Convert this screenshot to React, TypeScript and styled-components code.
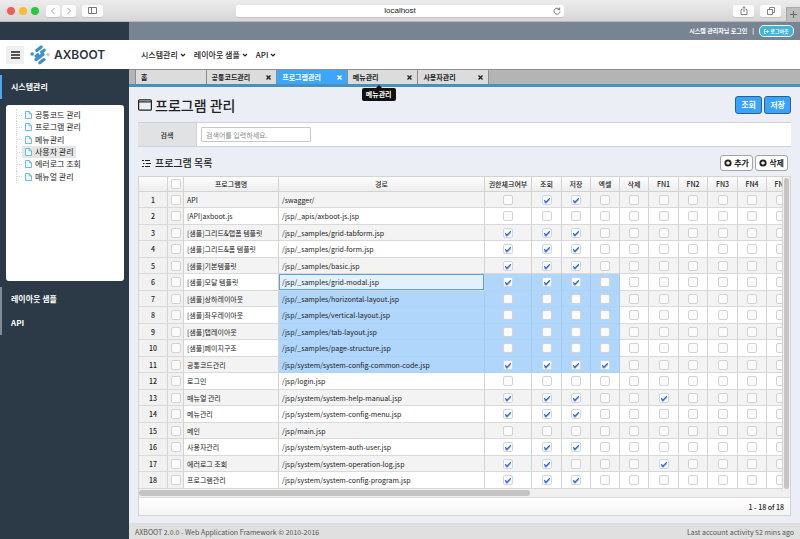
import React from "react";
import styled, { createGlobalStyle } from "styled-components";

const GlobalStyle = createGlobalStyle`
  *, *::before, *::after { box-sizing: border-box; }
  body {
    margin: 0;
    font-family: "Noto Sans CJK KR", "Noto Sans", sans-serif;
    font-size: 7px;
    line-height: 12px;
    color: #222;
    background: #ebeef5;
  }
  button, input { font: inherit; color: inherit; margin: 0; }
  h1, h2, ul { margin: 0; padding: 0; }
  ul { list-style: none; }
  a { color: inherit; text-decoration: none; }
`;

const SIDE = "129px";

const Window = styled.div`
  min-height: 100vh;
  display: flex;
  flex-direction: column;
`;

/* ---------- browser bar ---------- */

const TitleBar = styled.div`
  height: 22px;
  display: grid;
  grid-template-columns: 1fr 328px 1fr;
  background: linear-gradient(#ececec, #d6d6d6);
  border-bottom: 1px solid #b9b9b9;
`;

const ChromeGroup = styled.div<{ $end?: boolean }>`
  display: flex;
  align-items: center;
  gap: 2px;
  justify-content: ${(p) => (p.$end ? "flex-end" : "flex-start")};
  padding-left: ${(p) => (p.$end ? "0" : "7px")};
`;

const Lights = styled.div`
  display: flex;
  gap: 4px;
  margin-right: 5px;
`;

const Light = styled.span<{ $color: string }>`
  width: 8px;
  height: 8px;
  border-radius: 50%;
  background: ${(p) => p.$color};
`;

const ChromeButton = styled.button<{ $wide?: boolean; $gap?: boolean }>`
  width: ${(p) => (p.$wide ? "21px" : "14px")};
  height: 12px;
  margin-left: ${(p) => (p.$gap ? "4px" : "0")};
  display: flex;
  align-items: center;
  justify-content: center;
  padding: 0;
  border: 0;
  border-radius: 2px;
  background: #fbfbfb;
  color: #777;
  box-shadow: 0 1px 0 #c4c4c4;
`;

const NewTab = styled.button`
  width: 14px;
  align-self: flex-end;
  height: 14px;
  margin-left: 3px;
  display: flex;
  align-items: center;
  justify-content: center;
  padding: 0;
  border: 1px solid #a9a9a9;
  border-width: 1px 0 0 1px;
  background: #bdbdbd;
  color: #666;
`;

const Address = styled.div`
  align-self: center;
  height: 12px;
  display: grid;
  grid-template-columns: 14px 1fr 14px;
  align-items: center;
  justify-items: center;
  background: #fff;
  border-radius: 2px;
  box-shadow: 0 1px 0 #c4c4c4;
  font-family: "Liberation Sans", sans-serif;
  font-size: 8px;
`;

/* ---------- application header ---------- */

const TopBar = styled.div`
  height: 18px;
  flex: none;
  display: grid;
  grid-template-columns: ${SIDE} 1fr;
  background: #2c3947;
`;

const UserBar = styled.div`
  display: flex;
  align-items: center;
  justify-content: flex-end;
  gap: 5px;
  padding-right: 6px;
  background: #788492;
  color: #fff;
  font-size: 6px;
  font-weight: 700;
`;

const Logout = styled.button`
  height: 12px;
  width: 35px;
  display: flex;
  align-items: center;
  justify-content: center;
  gap: 1px;
  padding: 0;
  border: 1px solid #e8f6fb;
  border-radius: 5px;
  background: #43b3d8;
  color: #fff;
  font-size: 5px;
  line-height: 8px;
`;

const NavBar = styled.header`
  height: 29px;
  flex: none;
  display: grid;
  grid-template-columns: ${SIDE} 1fr;
  align-items: center;
  background: #fff;
`;

const Brand = styled.div`
  display: flex;
  align-items: center;
  padding-left: 6px;
`;

const MenuToggle = styled.button`
  width: 18px;
  height: 18px;
  padding: 0;
  border: 0;
  display: flex;
  align-items: center;
  justify-content: center;
  background: #efefef;
  color: #222;
`;

const LogoArt = styled.svg`
  width: 20px;
  height: 20px;
  margin: 0 4px 0 6px;
`;

const Wordmark = styled.span`
  font-family: Inter, sans-serif;
  font-size: 12px;
  font-weight: 600;
  color: #2c333d;
`;

const Nav = styled.nav`
  display: flex;
  gap: 8px;
  padding-left: 12px;
`;

const NavLink = styled.a`
  display: flex;
  align-items: center;
  gap: 2px;
  font-size: 8px;
  font-weight: 500;
`;

/* ---------- side menu ---------- */

const Body = styled.div`
  flex: 1;
  display: grid;
  grid-template-columns: ${SIDE} minmax(0, 1fr);
`;

const Side = styled.aside`
  background: #2c3947;
  display: flex;
  flex-direction: column;
  padding-top: 6px;
`;

const SideItem = styled.a<{ $active?: boolean }>`
  height: 24px;
  display: flex;
  align-items: center;
  padding-left: 9px;
  border-left: 2px solid ${(p) => (p.$active ? "#4aa8ee" : "#7f8b98")};
  color: #fff;
  font-size: 8px;
  font-weight: 700;
`;

const TreePanel = styled.div`
  height: 176px;
  margin: 6px 5px 6px 6px;
  padding: 4px 0 0 10px;
  background: #fff;
  border-radius: 3px;
`;

const Tree = styled.ul`
  height: 74px;
  display: grid;
  grid-template-rows: repeat(6, 1fr);
`;

const TreeItem = styled.li`
  display: flex;
  align-items: center;
  border-left: 1px dotted #d4d4d4;

  &::before {
    content: "";
    width: 5px;
    border-top: 1px dotted #d4d4d4;
  }
`;

const TreeLink = styled.a<{ $active?: boolean }>`
  height: 12px;
  display: flex;
  align-items: center;
  gap: 3px;
  padding: 0 2px 0 3px;
  background: ${(p) => (p.$active ? "#e6e6e6" : "transparent")};
  font-size: 8px;
  font-weight: 400;
`;

/* ---------- tabs ---------- */

const Main = styled.main`
  display: flex;
  flex-direction: column;
`;

const TabStrip = styled.div`
  height: 18px;
  display: flex;
  padding-left: 6px;
  background: #b4b4b4;
  border-top: 1px solid #8e8e8e;
  border-bottom: 3px solid #4791bd;
`;

const Tabs = styled.div`
  width: 354px;
  display: grid;
  grid-template-columns: repeat(5, 1fr);
  border-left: 1px solid #8c8c8c;
`;

const Tab = styled.div<{ $active?: boolean }>`
  position: relative;
  display: flex;
  align-items: center;
  justify-content: space-between;
  padding: 0 5px 0 5px;
  border-right: 1px solid #8c8c8c;
  background: ${(p) => (p.$active ? "#3ea6fa" : "#dcdcdc")};
  color: ${(p) => (p.$active ? "#fff" : "#222")};
`;

const TabName = styled.button`
  padding: 0;
  border: 0;
  background: none;
  font-size: 7px;
  font-weight: 700;
  line-height: 12px;
`;

const TabClose = styled.button`
  padding: 0;
  border: 0;
  background: none;
  display: flex;
`;

const Tooltip = styled.span`
  position: absolute;
  z-index: 2;
  top: 18px;
  left: 14px;
  padding: 0 4px;
  border-radius: 2px;
  background: #111;
  color: #fff;
  font-size: 7px;
  font-weight: 700;
  line-height: 13px;
  white-space: nowrap;

  &::before {
    content: "";
    position: absolute;
    left: calc(50% - 3px);
    top: -3px;
    border: 3px solid transparent;
    border-top: 0;
    border-bottom-color: #111;
  }
`;

/* ---------- page ---------- */

const Page = styled.div`
  flex: 1;
  padding: 9px 9px 7px;
`;

const PageHead = styled.div`
  display: flex;
  align-items: center;
  justify-content: space-between;
`;

const PageTitle = styled.h1`
  display: flex;
  align-items: center;
  gap: 3px;
  font-size: 14px;
  font-weight: 500;
  line-height: 18px;
`;

const Actions = styled.div<{ $inset?: boolean }>`
  display: flex;
  gap: 2px;
  padding-right: ${(p) => (p.$inset ? "3px" : "0")};
`;

const PrimaryButton = styled.button`
  width: 27px;
  height: 18px;
  padding: 0;
  border: 1px solid #2b5f8e;
  border-radius: 3px;
  background: #3aa3fb;
  color: #fff;
  font-size: 8px;
  font-weight: 700;
  line-height: 12px;
`;

const SmallButton = styled.button`
  width: 33px;
  height: 16px;
  display: flex;
  align-items: center;
  justify-content: center;
  gap: 2px;
  padding: 0;
  border: 1px solid #a3a3a3;
  border-radius: 3px;
  background: #fff;
  font-size: 8px;
  font-weight: 700;
  line-height: 12px;
`;

const SearchRow = styled.form`
  margin-top: 8px;
  height: 25px;
  display: flex;
  border: 1px solid #cfd1d6;
  border-width: 1px 0;
  background: #fff;
`;

const SearchLabel = styled.label`
  width: 59px;
  display: flex;
  align-items: center;
  justify-content: center;
  background: #e1e2e4;
  border-right: 1px solid #cfd1d6;
  font-weight: 500;
`;

const SearchInput = styled.input`
  align-self: center;
  width: 110px;
  height: 15px;
  margin-left: 4px;
  padding: 0 4px;
  border: 1px solid #c8c8c8;
  border-radius: 1px;
  background: #fff;

  &::placeholder { color: #8a8a8a; }
`;

const ListHead = styled.div`
  margin-top: 8px;
  display: flex;
  align-items: center;
  justify-content: space-between;
`;

const ListTitle = styled.h2`
  display: flex;
  align-items: center;
  gap: 4px;
  padding-left: 4px;
  font-size: 10px;
  font-weight: 500;
  line-height: 16px;
`;

/* ---------- grid ---------- */

const GridBox = styled.section`
  margin-top: 5px;
  border: 1px solid #d3d3d3;
  background: #f0f0f0;
`;

const GridView = styled.div`
  display: flex;
`;

const Clip = styled.div`
  flex: 1;
  min-width: 0;
  overflow: hidden;
`;

const VTrack = styled.div`
  width: 8px;
  padding: 1px 1px 0 1px;
  display: flex;
  border-left: 1px solid #d3d3d3;
  background: #f0f0f0;
`;

const VThumb = styled.div`
  flex: 1;
  border-radius: 3px;
  background: #c4c4c4;
`;

const HTrack = styled.div`
  height: 9px;
  padding: 1px 0;
  border-bottom: 1px solid #dcdcdc;
`;

const HThumb = styled.div`
  width: 60%;
  height: 6px;
  border-radius: 3px;
  background: #c4c4c4;
`;

const Pager = styled.div`
  height: 17px;
  display: flex;
  align-items: center;
  justify-content: flex-end;
  padding-right: 6px;
  background: linear-gradient(#fff, #f4f4f4);
  font-weight: 500;
`;

const Table = styled.table`
  width: 657px;
  table-layout: fixed;
  border-collapse: separate;
  border-spacing: 0;
`;

const Col = styled.col<{ $w: number }>`
  width: ${(p) => p.$w}px;
`;

const HeadCell = styled.th`
  height: 15px;
  padding: 0;
  border-right: 1px solid #d3d3d3;
  border-bottom: 1px solid #d3d3d3;
  background: linear-gradient(#fdfdfd, #ededed);
  font-weight: 500;
  line-height: 12px;
  white-space: nowrap;
`;

const Row = styled.tr`
  height: 16px;
  background: #f3f3f3;

  &:nth-child(even) {
    height: 17px;
    background: #fff;
  }
`;

type CellKind = "plain" | "selected" | "focused";

const cellBack = { plain: "transparent", selected: "#b0d6fc", focused: "#e3f1fe" };

const Cell = styled.td<{ $kind?: CellKind; $align?: "center"; $fixed?: boolean }>`
  padding: 0 0 0 ${(p) => (p.$align ? "0" : "3px")};
  text-align: ${(p) => p.$align ?? "left"};
  border-right: 1px solid ${(p) => (p.$kind === "selected" ? "#a5c9ee" : "#d3d3d3")};
  border-bottom: 1px solid ${(p) => (p.$kind === "selected" ? "#aed2f6" : "#d9d9d9")};
  background: ${(p) => (p.$fixed ? "#f1f1f1" : cellBack[p.$kind ?? "plain"])};
  box-shadow: ${(p) => (p.$kind === "focused" ? "inset 0 0 0 1px #5b9fdf" : "none")};
  line-height: 12px;
  font-weight: ${(p) => (p.$fixed ? 500 : 400)};
  white-space: nowrap;
  overflow: hidden;
`;

const Check = styled.input.attrs({ type: "checkbox" })`
  appearance: none;
  display: block;
  width: 10px;
  height: 10px;
  margin: 0 auto;
  border: 1px solid #d2d2d2;
  border-radius: 2px;
  background: #fbfbfb;

  &:checked {
    border-color: #c5d8ee;
    background: #fff;
  }

  &:checked::after {
    content: "";
    display: block;
    width: 6px;
    height: 3px;
    margin: 2px 0 0 1px;
    border: solid #2f5bd0;
    border-width: 0 0 1px 1px;
    transform: rotate(-45deg);
    box-shadow: -1px 1px 0 0 #7f9ce4;
  }
`;

const Footer = styled.footer`
  height: 17px;
  display: flex;
  align-items: center;
  justify-content: space-between;
  padding: 0 6px;
  background: #e0e0e0;
  color: #555;
`;

/* ---------- drawings ---------- */

const Chevron = () => (
  <svg width="6" height="6" viewBox="0 0 6 6" fill="none" stroke="currentColor" strokeWidth="1.2">
    <path d="M1 2l2 2 2-2" />
  </svg>
);

const Arrow = ({ d }: { d: string }) => (
  <svg width="6" height="8" viewBox="0 0 6 8" fill="none" stroke="#a5a5a5">
    <path d={d} />
  </svg>
);

const Cross = () => (
  <svg width="5" height="5" viewBox="0 0 5 5" stroke="currentColor" strokeWidth="1.4">
    <path d="M.5.5l4 4M4.5.5l-4 4" />
  </svg>
);

const Doc = () => (
  <svg width="7" height="8" viewBox="0 0 7 8" fill="#f3faff" stroke="#58b4e0" strokeWidth=".9">
    <path d="M.5.5h3.7l2.3 2.3v4.7h-6zM4.2.5v2.3h2.3" />
  </svg>
);

const Logo = () => (
  <LogoArt viewBox="0 0 20 20" fill="none" stroke="#3d8fd0" strokeWidth="3.2" strokeLinecap="round">
    <path d="M6.800 5.400l4.400-3.400M6.200 11l1.600-1.200M11.600 7.200l2.600-2M6 14.600l7-5.200M9.800 17.800l4.200-3.200" />
    <circle cx="2.200" cy="9" r="1.800" fill="#3d8fd0" stroke="none" />
    <circle cx="18" cy="9.600" r="1.800" fill="#c9cdd2" stroke="none" />
  </LogoArt>
);

const WindowIcon = () => (
  <svg width="14" height="12" viewBox="0 0 14 12" fill="none" stroke="#222" strokeWidth="1.2">
    <rect x=".6" y=".8" width="12.8" height="10.4" rx="1" />
    <path d="M.6 2.9h12.800" />
  </svg>
);

const ListIcon = () => (
  <svg width="9" height="8" viewBox="0 0 9 8" stroke="#222">
    <path d="M0 1.500h2M3 1.500h5M1 4.500h1.500M4 4.500h5M0 7.500h2M3 7.500h5" />
  </svg>
);

const PlusIcon = () => (
  <svg width="8" height="8" viewBox="0 0 8 8">
    <circle cx="4" cy="4" r="3.6" fill="#222" />
    <path d="M2.200 4h3.600M4 2.200v3.600" stroke="#fff" strokeWidth="1.300" />
  </svg>
);

/* ---------- data ---------- */

const columns = [29, 16, 95, 206, 47, 30, 29, 29, 29, 30, 29, 30, 29, 29];
const heads = ["프로그램명", "경로", "권한체크여부", "조회", "저장", "엑셀", "삭제", "FN1", "FN2", "FN3", "FN4", "FN5"];
const flags = heads.slice(2);

const programs: [string, string, number[]][] = [
  ["API", "/swagger/", [1, 2]],
  ["[API]axboot.js", "/jsp/_apis/axboot-js.jsp", []],
  ["[샘플]그리드&탭폼 템플릿", "/jsp/_samples/grid-tabform.jsp", [0, 1, 2]],
  ["[샘플]그리드&폼 템플릿", "/jsp/_samples/grid-form.jsp", [0, 1, 2]],
  ["[샘플]기본템플릿", "/jsp/_samples/basic.jsp", [0, 1, 2]],
  ["[샘플]모달 템플릿", "/jsp/_samples/grid-modal.jsp", [0, 1, 2]],
  ["[샘플]상하레이아웃", "/jsp/_samples/horizontal-layout.jsp", []],
  ["[샘플]좌우레이아웃", "/jsp/_samples/vertical-layout.jsp", []],
  ["[샘플]탭레이아웃", "/jsp/_samples/tab-layout.jsp", []],
  ["[샘플]페이지구조", "/jsp/_samples/page-structure.jsp", []],
  ["공통코드관리", "/jsp/system/system-config-common-code.jsp", [0, 1, 2, 3]],
  ["로그인", "/jsp/login.jsp", []],
  ["매뉴얼 관리", "/jsp/system/system-help-manual.jsp", [0, 1, 2, 5]],
  ["메뉴관리", "/jsp/system/system-config-menu.jsp", [0, 1, 2]],
  ["메인", "/jsp/main.jsp", []],
  ["사용자관리", "/jsp/system/system-auth-user.jsp", [0, 1, 2]],
  ["에러로그 조회", "/jsp/system/system-operation-log.jsp", [0, 1, 5]],
  ["프로그램관리", "/jsp/system/system-config-program.jsp", [0, 1, 2]],
];

const tree = ["공통코드 관리", "프로그램 관리", "메뉴관리", "사용자 관리", "에러로그 조회", "매뉴얼 관리"];
const tabs = ["홈", "공통코드관리", "프로그램관리", "메뉴관리", "사용자관리"];

const isSelected = (row: number) => row >= 5 && row <= 10;

export default function App() {
  return (
    <Window>
      <GlobalStyle />
      <TitleBar>
        <ChromeGroup>
          <Lights>
            <Light $color="#f25e57" />
            <Light $color="#f8be30" />
            <Light $color="#2bc840" />
          </Lights>
          <ChromeButton aria-label="Back"><Arrow d="M4.500 1l-3 3 3 3" /></ChromeButton>
          <ChromeButton aria-label="Forward"><Arrow d="M1.500 1l3 3-3 3" /></ChromeButton>
          <ChromeButton $wide $gap aria-label="Sidebar">
            <svg width="9" height="7" viewBox="0 0 9 7" fill="none" stroke="currentColor">
              <path d="M.5.5h8v6h-8zM3.500.5v6" />
            </svg>
          </ChromeButton>
        </ChromeGroup>
        <Address>
          <span />
          <span>localhost</span>
          <svg width="8" height="8" viewBox="0 0 8 8" fill="none" stroke="#666" strokeWidth=".9">
            <path d="M6.500 2.500A3 3 0 1 0 7 4.500M4.500 2.700h2.200V.5" />
          </svg>
        </Address>
        <ChromeGroup $end>
          <ChromeButton $wide aria-label="Share">
            <svg width="8" height="9" viewBox="0 0 8 9" fill="none" stroke="currentColor" strokeWidth=".9">
              <path d="M2.500 3.500h-1.500v5h6v-5h-1.500M4 6V.8M2.500 2.200L4 .7l1.500 1.500" />
            </svg>
          </ChromeButton>
          <ChromeButton $wide $gap aria-label="Tabs">
            <svg width="8" height="8" viewBox="0 0 8 8" fill="none" stroke="currentColor" strokeWidth=".9">
              <path d="M.5 2.500h5v5h-5zM2.500 2.500v-2h5v5h-2" />
            </svg>
          </ChromeButton>
          <NewTab aria-label="New tab">
            <svg width="7" height="7" viewBox="0 0 7 7" stroke="currentColor">
              <path d="M3.500 0v7M0 3.500h7" />
            </svg>
          </NewTab>
        </ChromeGroup>
      </TitleBar>

      <TopBar>
        <span />
        <UserBar>
          <span>시스템 관리자님 로그인</span>
          <span>|</span>
          <Logout>
            <svg width="5" height="5" viewBox="0 0 5 5" fill="none" stroke="#fff" strokeWidth=".8">
              <path d="M2 .5H.5v4H2M1.500 2.500h3M3.200 1.200l1.300 1.300-1.300 1.300" />
            </svg>
            로그아웃
          </Logout>
        </UserBar>
      </TopBar>

      <NavBar>
        <Brand>
          <MenuToggle aria-label="Menu">
            <svg width="9" height="8" viewBox="0 0 9 8" stroke="currentColor" strokeWidth="1.3">
              <path d="M0 1h9M0 4h9M0 7h9" />
            </svg>
          </MenuToggle>
          <Logo />
          <Wordmark>AXBOOT</Wordmark>
        </Brand>
        <Nav>
          {["시스템관리", "레이아웃 샘플", "API"].map((name) => (
            <NavLink href="#" key={name}>
              {name}
              <Chevron />
            </NavLink>
          ))}
        </Nav>
      </NavBar>

      <Body>
        <Side>
          <SideItem href="#" $active>시스템관리</SideItem>
          <TreePanel>
            <Tree>
              {tree.map((name) => (
                <TreeItem key={name}>
                  <TreeLink href="#" $active={name === "사용자 관리"}>
                    <Doc />
                    {name}
                  </TreeLink>
                </TreeItem>
              ))}
            </Tree>
          </TreePanel>
          <SideItem href="#">레이아웃 샘플</SideItem>
          <SideItem href="#">API</SideItem>
        </Side>

        <Main>
          <TabStrip>
            <Tabs>
              {tabs.map((name, i) => (
                <Tab key={name} $active={i === 2}>
                  <TabName>{name}</TabName>
                  {i > 0 && (
                    <TabClose aria-label={`${name} 닫기`}>
                      <Cross />
                    </TabClose>
                  )}
                  {i === 3 && <Tooltip role="tooltip">{name}</Tooltip>}
                </Tab>
              ))}
            </Tabs>
          </TabStrip>

          <Page>
            <PageHead>
              <PageTitle>
                <WindowIcon />
                프로그램 관리
              </PageTitle>
              <Actions>
                <PrimaryButton>조회</PrimaryButton>
                <PrimaryButton>저장</PrimaryButton>
              </Actions>
            </PageHead>

            <SearchRow>
              <SearchLabel htmlFor="keyword">검색</SearchLabel>
              <SearchInput id="keyword" placeholder="검색어를 입력하세요." />
            </SearchRow>

            <ListHead>
              <ListTitle>
                <ListIcon />
                프로그램 목록
              </ListTitle>
              <Actions $inset>
                <SmallButton><PlusIcon />추가</SmallButton>
                <SmallButton><PlusIcon />삭제</SmallButton>
              </Actions>
            </ListHead>

            <GridBox>
              <GridView>
                <Clip>
                  <Table>
                    <colgroup>
                      {columns.map((w, i) => <Col key={i} $w={w} />)}
                    </colgroup>
                    <thead>
                      <tr>
                        <HeadCell />
                        <HeadCell><Check aria-label="전체 선택" /></HeadCell>
                        {heads.map((h) => <HeadCell key={h}>{h}</HeadCell>)}
                      </tr>
                    </thead>
                    <tbody>
                      {programs.map(([name, path, on], r) => (
                        <Row key={path}>
                          <Cell $fixed $align="center">{r + 1}</Cell>
                          <Cell $fixed $align="center"><Check aria-label={`${name} 선택`} /></Cell>
                          <Cell>{name}</Cell>
                          <Cell $kind={r === 5 ? "focused" : isSelected(r) ? "selected" : "plain"}>{path}</Cell>
                          {flags.map((flag, c) => (
                            <Cell key={flag} $align="center" $kind={isSelected(r) && c < 4 ? "selected" : "plain"}>
                              <Check aria-label={`${name} ${flag}`} defaultChecked={on.includes(c)} />
                            </Cell>
                          ))}
                        </Row>
                      ))}
                    </tbody>
                  </Table>
                </Clip>
                <VTrack><VThumb /></VTrack>
              </GridView>
              <HTrack><HThumb /></HTrack>
              <Pager>1 - 18 of 18</Pager>
            </GridBox>
          </Page>

          <Footer>
            <span>AXBOOT 2.0.0 - Web Application Framework © 2010-2016</span>
            <span>Last account activity 52 mins ago</span>
          </Footer>
        </Main>
      </Body>
    </Window>
  );
}
